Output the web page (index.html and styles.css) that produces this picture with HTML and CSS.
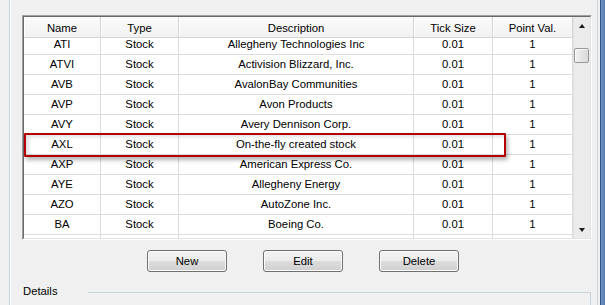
FILE: index.html
```html
<!DOCTYPE html>
<html>
<head>
    <title>Instruments</title>
    <link rel="stylesheet" href="styles.css">
</head>
<body>
    <div class="window">
        <div class="group">
            <div class="list">
                <div class="list-inner">
                    <div class="grid">
                        <div class="row head">
                            <div>Name</div>
                            <div>Type</div>
                            <div>Description</div>
                            <div>Tick Size</div>
                            <div>Point Val.</div>
                        </div>
                        <div class="rows">
                            <div class="rows-inner">
                                <div class="row"><div>ATI</div><div>Stock</div><div>Allegheny Technologies Inc</div><div>0.01</div><div>1</div></div>
                                <div class="row"><div>ATVI</div><div>Stock</div><div>Activision Blizzard, Inc.</div><div>0.01</div><div>1</div></div>
                                <div class="row"><div>AVB</div><div>Stock</div><div>AvalonBay Communities</div><div>0.01</div><div>1</div></div>
                                <div class="row"><div>AVP</div><div>Stock</div><div>Avon Products</div><div>0.01</div><div>1</div></div>
                                <div class="row"><div>AVY</div><div>Stock</div><div>Avery Dennison Corp.</div><div>0.01</div><div>1</div></div>
                                <div class="row"><div>AXL</div><div>Stock</div><div>On-the-fly created stock</div><div>0.01</div><div>1</div></div>
                                <div class="row"><div>AXP</div><div>Stock</div><div>American Express Co.</div><div>0.01</div><div>1</div></div>
                                <div class="row"><div>AYE</div><div>Stock</div><div>Allegheny Energy</div><div>0.01</div><div>1</div></div>
                                <div class="row"><div>AZO</div><div>Stock</div><div>AutoZone Inc.</div><div>0.01</div><div>1</div></div>
                                <div class="row"><div>BA</div><div>Stock</div><div>Boeing Co.</div><div>0.01</div><div>1</div></div>
                                <div class="row"><div></div><div></div><div></div><div></div><div></div></div>
                            </div>
                        </div>
                    </div>
                    <div class="scrollbar">
                        <div class="arrow up"></div>
                        <div class="track">
                            <div class="thumb"></div>
                        </div>
                        <div class="arrow down"></div>
                    </div>
                </div>
            </div>

            <div class="buttons">
                <button type="button">New</button>
                <button type="button">Edit</button>
                <button type="button">Delete</button>
            </div>

            <div class="details">
                <span class="details-label">Details</span>
                <span class="details-line"></span>
            </div>

            <!-- annotation drawn over the list -->
            <div class="highlight"></div>
        </div>
    </div>
    <div class="frame-edge"></div>
</body>
</html>
```

FILE: styles.css
```css
body {
    margin: 0;
    height: 305px;
    overflow: hidden;
    display: flex;
    background: #f0f0f0;
    font-family: "Liberation Sans", Arial, sans-serif;
    font-size: 11.3px;
    color: #000;
}

.window {
    flex: 1;
    padding: 0 2px 0 9px;
}

.group {
    position: relative;
    height: 100%;
    box-sizing: border-box;
    padding: 15px 0 0 12px;
    border-left: 1px solid #c9d3da;
    border-right: 1px solid #c9d3da;
    box-shadow: inset 1px 0 #ffffff;
}

.list {
    width: 570px;
    box-sizing: border-box;
    border: 1px solid;
    border-color: #a0a0a0 #ffffff #ffffff #a0a0a0;
}

.list-inner {
    display: flex;
    height: 221px;
    border: 1px solid;
    border-color: #696969 #e3e3e3 #e3e3e3 #696969;
    background: #fff;
}

.grid {
    width: 549px;
    display: flex;
    flex-direction: column;
}

.row {
    display: grid;
    grid-template-columns: 77px 78px 235px 79px 80px;
    height: 20px;
}

.row > div {
    box-sizing: border-box;
    border-right: 1px solid #dcdcdc;
    border-bottom: 1px solid #dcdcdc;
    text-align: center;
    line-height: 19px;
    white-space: nowrap;
    overflow: hidden;
}

.head {
    height: 21px;
    position: relative;
    z-index: 1;
}

.head > div {
    padding-top: 2px;
    line-height: 18px;
    background: linear-gradient(#fbfbfb, #f1f1f1);
    border-right-color: #d5d5d5;
    border-bottom-color: #d5d5d5;
    box-shadow: inset 1px 0 #ffffff;
}

.rows {
    flex: 1;
    overflow: hidden;
}

.rows-inner {
    margin-top: -3px;
}

.scrollbar {
    width: 17px;
    display: flex;
    flex-direction: column;
    background: #ebebeb;
    box-shadow: inset 1px 0 #e2e2e2;
}

.arrow {
    height: 17px;
    display: flex;
    align-items: center;
    justify-content: center;
}

.arrow::before {
    content: "";
    border-left: 3px solid transparent;
    border-right: 3px solid transparent;
}

.arrow.up::before {
    border-bottom: 4px solid #1a1a1a;
}

.arrow.down::before {
    border-top: 4px solid #1a1a1a;
}

.track {
    flex: 1;
}

.thumb {
    margin: 14px 0 0 1px;
    width: 15px;
    height: 15px;
    box-sizing: border-box;
    border: 1px solid #979797;
    border-radius: 2px;
    background: linear-gradient(90deg, #f3f3f3, #e4e4e4 50%, #d8d8d8);
    box-shadow: inset 1px 1px #fbfbfb;
}

.buttons {
    display: flex;
    gap: 36px;
    margin: 10px 0 0 125px;
}

.buttons button {
    width: 80px;
    height: 22px;
    padding: 0;
    font-family: inherit;
    font-size: 11.3px;
    color: #000;
    border: 1px solid #707070;
    border-radius: 3px;
    background: linear-gradient(#f2f2f2 0%, #ebebeb 50%, #dddddd 50%, #cfcfcf 100%);
    box-shadow: inset 0 0 0 1px #fbfbfb;
}

.details {
    display: flex;
    margin-top: 12px;
    height: 30px;
}

.details-label {
    width: 65px;
    padding-left: 1px;
    line-height: 14px;
}

.details-line {
    margin-top: 8px;
    width: 502px;
    border-top: 1px solid #c9d3da;
    border-right: 1px solid #c9d3da;
    box-shadow: 0 1px #ffffff;
}

.highlight {
    position: absolute;
    left: 14px;
    top: 133px;
    width: 482px;
    height: 24px;
    box-sizing: border-box;
    border: 2px solid #b50000;
    border-radius: 1px;
    box-shadow: 2px 3px 4px rgba(0, 0, 0, 0.3), inset 3px 2px 4px rgba(0, 0, 0, 0.12);
}

.frame-edge {
    width: 5px;
    background: linear-gradient(90deg, #2f5684 0, #2f5684 1px, #6d93c4 1px, #5a80b2);
}
```
